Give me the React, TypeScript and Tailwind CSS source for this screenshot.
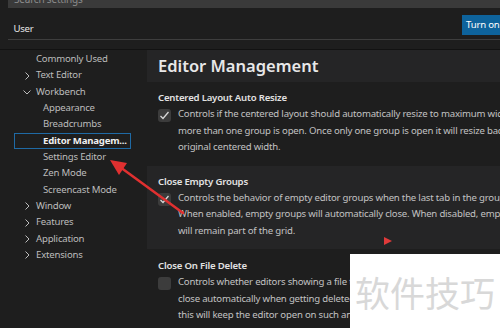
import React from "react";

const tree = [
  { label: "Commonly Used", indent: 1 },
  { label: "Text Editor", indent: 0, chevron: "right" },
  { label: "Workbench", indent: 0, chevron: "down" },
  { label: "Appearance", indent: 2 },
  { label: "Breadcrumbs", indent: 2 },
  { label: "Editor Managem...", indent: 2, active: true },
  { label: "Settings Editor", indent: 2 },
  { label: "Zen Mode", indent: 2 },
  { label: "Screencast Mode", indent: 2 },
  { label: "Window", indent: 0, chevron: "right" },
  { label: "Features", indent: 0, chevron: "right" },
  { label: "Application", indent: 0, chevron: "right" },
  { label: "Extensions", indent: 0, chevron: "right" },
];

const settings = [
  {
    title: "Centered Layout Auto Resize",
    checked: true,
    lines: [
      "Controls if the centered layout should automatically resize to maximum width when",
      "more than one group is open. Once only one group is open it will resize back to the",
      "original centered width.",
    ],
  },
  {
    title: "Close Empty Groups",
    checked: true,
    hover: true,
    lines: [
      "Controls the behavior of empty editor groups when the last tab in the group is closed.",
      "When enabled, empty groups will automatically close. When disabled, empty groups",
      "will remain part of the grid.",
    ],
  },
  {
    title: "Close On File Delete",
    checked: false,
    lines: [
      "Controls whether editors showing a file that was opened during the session should",
      "close automatically when getting deleted or renamed by some other process. Disabling",
      "this will keep the editor open on such an event. Note that deleting from within the",
      "application will always close the editor and that editors with unsaved changes will never",
    ],
  },
];

function Chevron({ dir }: { dir: string }) {
  return (
    <svg width="10" height="10" viewBox="0 0 10 10" className="shrink-0">
      {dir === "right" ? (
        <path d="M3.5 1.5 L7 5 L3.5 8.5" stroke="#bdbdbd" strokeWidth="1" fill="none" />
      ) : (
        <path d="M1.5 3.5 L5 7 L8.5 3.5" stroke="#bdbdbd" strokeWidth="1" fill="none" />
      )}
    </svg>
  );
}

function Check({ checked }: { checked: boolean }) {
  return (
    <div className="w-[13px] h-[13px] mt-[3px] rounded-[3px] bg-[#3c3c3c] shrink-0 flex items-center justify-center">
      {checked && (
        <svg width="11" height="11" viewBox="0 0 11 11">
          <path d="M1.5 6 L4 8.5 L9.5 2" stroke="#d8d8d8" strokeWidth="1.3" fill="none" />
        </svg>
      )}
    </div>
  );
}

export default function App() {
  return (
    <div className="relative w-[500px] h-[328px] overflow-hidden bg-[#1e1e1e] font-['Noto_Sans',sans-serif] text-[9.6px] tracking-[-0.2px]">
      <div className="ml-2 h-[8px] bg-[#3a3a3a] overflow-hidden">
        <div className="pl-[6px] -mt-[7px] text-[10px] text-[#8a8a8a] leading-[12px]">Search settings</div>
      </div>

      <div className="ml-2 h-[32px] flex items-start border-b border-[#3e3e3e] overflow-hidden">
        <div className="mt-[15px] h-[17px] w-[31px] shrink-0 border-b border-[#d0d0d0] flex justify-center leading-[12px] text-[#e6e6e6]">
          User
        </div>
        <div className="ml-[423px] mt-[7px] h-[20px] pl-[4px] pr-[8px] shrink-0 bg-[#0e639c] text-white leading-[20px] whitespace-nowrap">
          Turn on Settings Sync
        </div>
      </div>
      <div className="h-[9px]" />
      <div className="h-[1px] bg-[#121212]" />

      <div className="flex">
        <div className="w-[147px] shrink-0 pt-[1px]">
          {tree.map((t) => (
            <div key={t.label} className="h-[16.35px] flex items-center">
              {t.active ? (
                <div className="ml-[14px] w-[117px] h-[16px] border border-[#1f6aa5] flex items-center pl-[28px] font-bold text-[#f0f0f0] whitespace-nowrap">
                  {t.label}
                </div>
              ) : (
                <div
                  className={
                    "flex items-center whitespace-nowrap text-[#bcbcbc] " +
                    (t.indent === 2 ? "pl-[43px]" : t.indent === 1 ? "pl-[36px]" : "pl-[22px]")
                  }
                >
                  {t.chevron && (
                    <span className="mr-[4px]">
                      <Chevron dir={t.chevron} />
                    </span>
                  )}
                  {t.label}
                </div>
              )}
            </div>
          ))}
        </div>

        <div className="flex-1 min-w-0">
          <div className="h-[32px] bg-[#252526] pl-[11px] flex items-center text-[16.5px] tracking-normal font-semibold text-[#e8e8e8] whitespace-nowrap">
            Editor Management
          </div>
          {settings.map((s, i) => (
            <div
              key={s.title}
              className={
                "pl-[11px] pb-[10px] " +
                (i === 2 ? "pt-[9px] " : "pt-[8px] ") +
                (s.hover ? "bg-[#252526]" : "")
              }
            >
              <div className="h-[16px] leading-[16px] font-semibold text-[#e2e2e2] whitespace-nowrap">{s.title}</div>
              <div className="flex gap-[7px]">
                <Check checked={s.checked} />
                <div className="text-[#c2c2c2] leading-[16.5px]">
                  {s.lines.map((l) => (
                    <div key={l} className="whitespace-nowrap">
                      {l}
                    </div>
                  ))}
                </div>
              </div>
            </div>
          ))}
        </div>
      </div>

      <svg className="absolute left-0 top-0 pointer-events-none" width="500" height="328" viewBox="0 0 500 328">
        <line x1="183" y1="213" x2="120" y2="167" stroke="#e03030" strokeWidth="2.5" strokeLinecap="round" />
        <polygon points="110,160 127,163 119,175" fill="#e03030" />
        <polygon points="384,237 392,241 384,245" fill="#e03a3a" />
      </svg>

      <div className="absolute left-[350px] top-[254px] w-[150px] h-[74px] bg-white flex items-center pl-[5px]">
        <span className="text-[35px] leading-none tracking-normal text-[#d8d8d8] font-['Noto_Sans_CJK_SC',sans-serif] whitespace-nowrap">
          软件技巧
        </span>
      </div>
    </div>
  );
}
